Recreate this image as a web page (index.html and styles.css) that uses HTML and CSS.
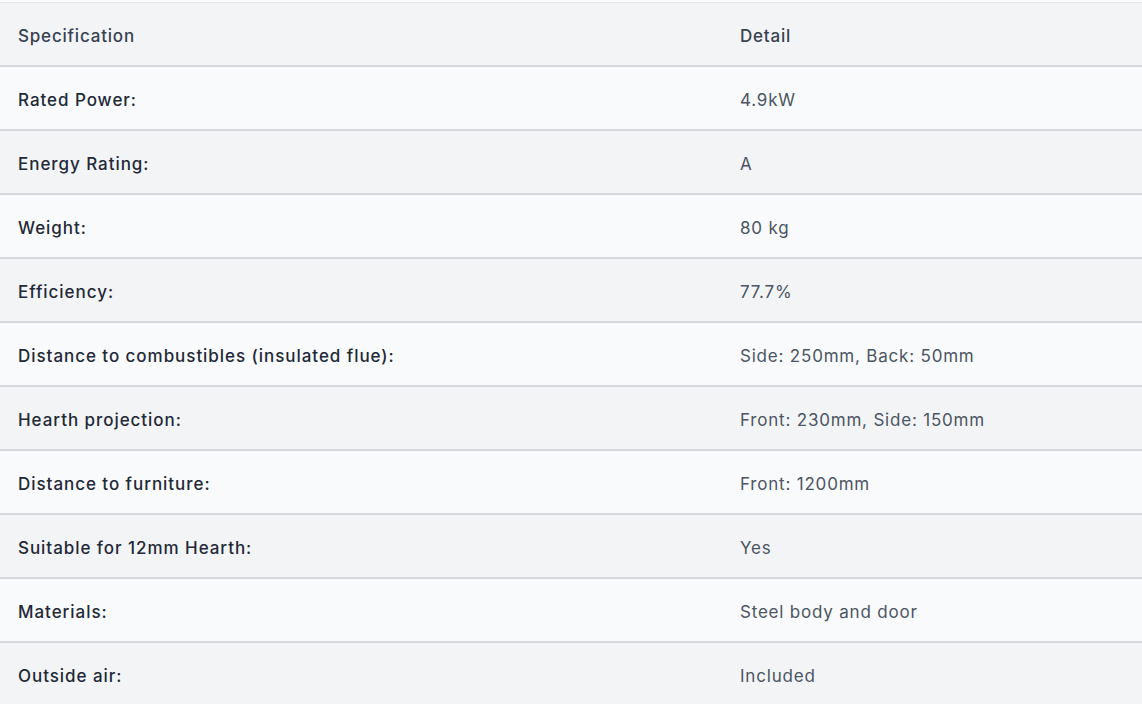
FILE: index.html
```html
<!DOCTYPE html>
<html>
<head>
<meta charset="utf-8">
<link rel="stylesheet" href="styles.css">
</head>
<body>
<div class="wrap">
<table class="spec">
<thead>
<tr><th class="c1">Specification</th><th class="c2">Detail</th></tr>
</thead>
<tbody>
<tr><td class="label">Rated Power:</td><td class="val">4.9kW</td></tr>
<tr><td class="label">Energy Rating:</td><td class="val">A</td></tr>
<tr><td class="label">Weight:</td><td class="val">80 kg</td></tr>
<tr><td class="label">Efficiency:</td><td class="val">77.7%</td></tr>
<tr><td class="label">Distance to combustibles (insulated flue):</td><td class="val">Side: 250mm, Back: 50mm</td></tr>
<tr><td class="label">Hearth projection:</td><td class="val">Front: 230mm, Side: 150mm</td></tr>
<tr><td class="label">Distance to furniture:</td><td class="val">Front: 1200mm</td></tr>
<tr><td class="label">Suitable for 12mm Hearth:</td><td class="val">Yes</td></tr>
<tr><td class="label">Materials:</td><td class="val">Steel body and door</td></tr>
<tr><td class="label">Outside air:</td><td class="val">Included</td></tr>
</tbody>
</table>
</div>
</body>
</html>
```
FILE: styles.css
```css
html, body {
  margin: 0;
  padding: 0;
  background: #f9fafb;
}
body {
  font-family: Inter, "Noto Sans", sans-serif;
  font-size: 17px;
  letter-spacing: 0.8px;
  -webkit-font-smoothing: antialiased;
}
.wrap {
  padding-top: 2px;
}
.spec {
  width: 100%;
  border-collapse: collapse;
  border-top: 1px solid #e5e7eb;
}
.spec th, .spec td {
  text-align: left;
  padding: 21px 18px 17px;
  line-height: 24px;
  border-bottom: 2px solid #d4d6dc;
}
.spec th {
  font-weight: 500;
  color: #374151;
  background: #f3f4f6;
}
.spec .c1 {
  width: 686px;
}
.spec tbody tr:nth-child(odd) td {
  background: #f9fafb;
}
.spec tbody tr:nth-child(even) td {
  background: #f3f4f6;
}
.label {
  font-weight: 500;
  color: #1f2937;
  letter-spacing: 0.95px;
}
.val {
  font-weight: 400;
  color: #4b5563;
}
```
